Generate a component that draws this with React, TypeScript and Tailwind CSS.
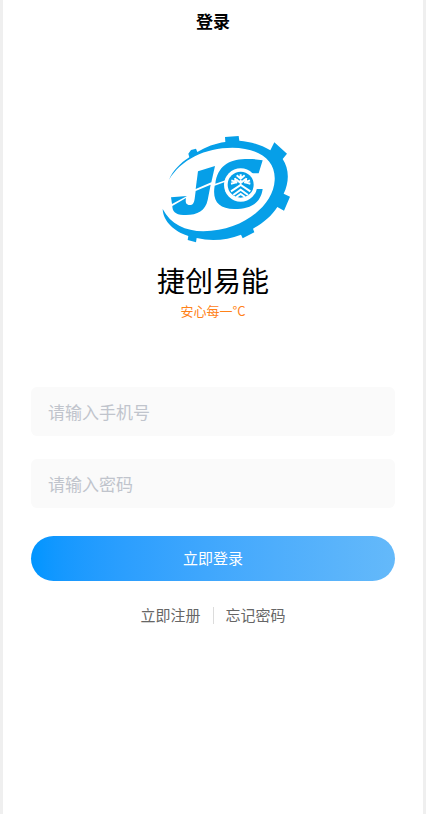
import React, { useState } from 'react';

const Logo = () => (
  <svg viewBox="-72 0 522 375" className="w-[174px] h-[125px]" role="img" aria-label="捷创易能">
    {/* gear ring */}
    <path
      fill="#069fe8"
      d="M57 164 C69 137 91 114 118 97 L115 86 L123 75 L138 71 L142 81 C168 66 195 55 226 51 L225 36 L266 33 L268 47 C303 50 335 60 361 76 L373 52 L411 86 L398 102 C417 130 419 169 401 206 L420 215 L402 257 L382 246 C364 274 340 294 309 311 L313 322 L278 340 L273 329 C231 345 186 350 140 339 L138 352 L113 345 L115 333 C73 319 40 291 38 252 C62 298 106 318 160 319 C280 318 371 240 374 166 C378 102 323 69 247 68 C165 68 93 104 57 164 Z"
    />
    {/* letter J */}
    <path fill="#069fe8" d="M144 139 L195 123 L184 172 L137 192 Z" />
    <path fill="#069fe8" d="M63 217 L111 213 L66 237 Z" />
    <path
      fill="#069fe8"
      d="M67 243 L108 219 C105 234 110 240 119 240 C129 240 132 233 134 221 L137 198 L182 179 L173 225 C166 259 139 272 100 270 C75 269 67 258 67 243 Z"
    />
    {/* letter C */}
    <path
      fill="#069fe8"
      d="M338 106 L326 145 L301 145 L235 163 L196 176 C202 126 235 103 285 102 C303 101 321 103 338 106 Z"
    />
    <path
      fill="#069fe8"
      d="M194 182 L233 168 L250 218 L295 222 L313 192 L338 192 C332 235 302 252 253 252 C206 252 186 228 194 182 Z"
    />
    <circle cx="272" cy="180" r="50" fill="#fff" />
    <circle cx="272" cy="179" r="39" fill="#069fe8" />
    {/* snowflake over roof chevrons */}
    <g fill="none" stroke="#fff" strokeWidth="6">
      <path d="M272 148 V178 M260 151 L272 161 L284 151 M258 163 L272 174 L286 163" />
      <path d="M244 166 L262 173 M243 176 L258 172 L255 159 M300 166 L282 173 M301 176 L286 172 L289 159" />
      <path d="M243 199 L272 180 L301 199 M250 210 L272 194 L294 210 M259 216 L272 207 L285 216" />
    </g>
  </svg>
);

interface FieldProps {
  label: string;
  type: string;
  value: string;
  onChange: (value: string) => void;
}

const Field: React.FC<FieldProps> = ({ label, type, value, onChange }) => (
  <input
    type={type}
    aria-label={label}
    placeholder={label}
    value={value}
    onChange={(e) => onChange(e.target.value)}
    className="block w-full h-[49px] rounded-md bg-[#fafafa] px-[17px] text-[17px] text-gray-900 placeholder:text-[#c0c4cc] outline-none"
  />
);

export default function App() {
  const [phone, setPhone] = useState('');
  const [password, setPassword] = useState('');

  return (
    <div className="min-h-screen bg-white border-x-3 border-[#efefef] font-['Noto_Sans_CJK_SC',sans-serif]">
      <header className="h-[42px] flex items-center justify-center">
        <h1 className="text-[17px] leading-6 font-bold text-black">登录</h1>
      </header>

      <main className="px-7">
        <div className="flex flex-col items-center pt-[83px]">
          <Logo />
          <p className="mt-[9px] text-[28px] leading-[42px] text-black">捷创易能</p>
          <p className="text-[13px] leading-[19px] text-[#ff8219]">安心每一°C</p>
        </div>

        <form className="mt-[67px]" onSubmit={(e) => e.preventDefault()}>
          <div className="flex flex-col gap-[23px]">
            <Field label="请输入手机号" type="tel" value={phone} onChange={setPhone} />
            <Field label="请输入密码" type="password" value={password} onChange={setPassword} />
          </div>
          <button
            type="submit"
            className="mt-7 w-full h-[45px] rounded-full bg-linear-to-r from-[#0095ff] to-[#64b9fa] text-[15px] text-white"
          >
            立即登录
          </button>
        </form>

        <nav className="mt-[22px] flex items-center justify-center gap-3 text-[15px] leading-6 text-[#666]">
          <a href="#register">立即注册</a>
          <span className="w-px h-[17px] bg-[#dcdcdc]" />
          <a href="#forgot">忘记密码</a>
        </nav>
      </main>
    </div>
  );
}
